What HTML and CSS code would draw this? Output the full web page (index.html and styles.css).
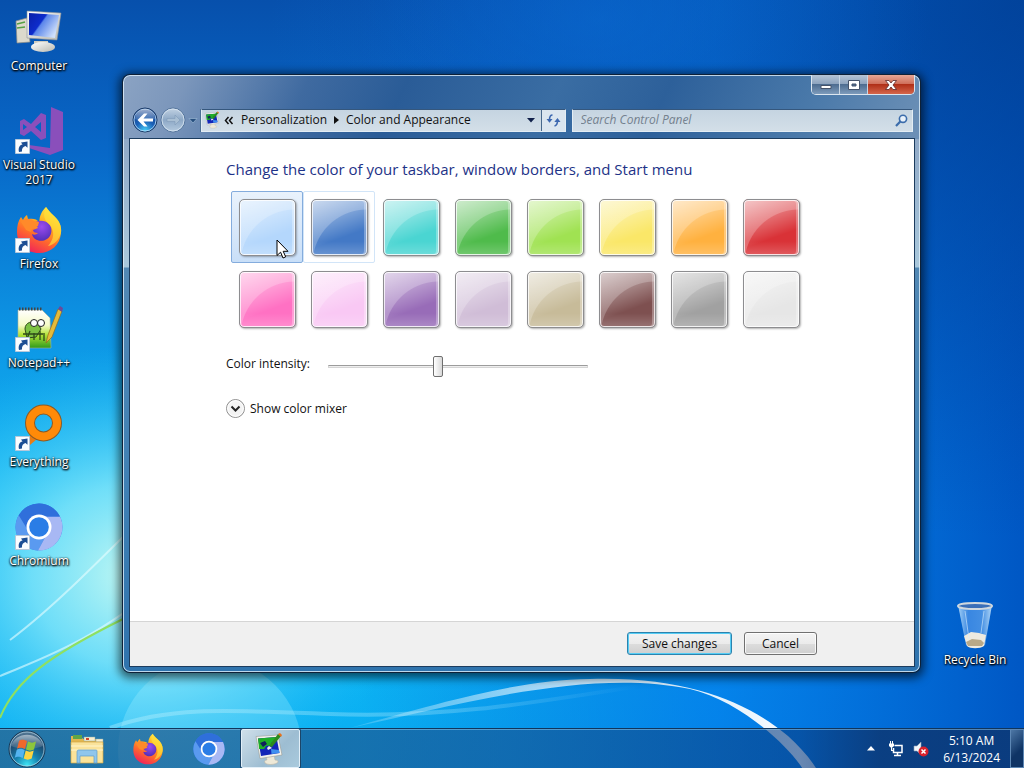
FILE: index.html
```html
<!DOCTYPE html>
<html lang="en">
<head>
<meta charset="utf-8">
<title>Color and Appearance</title>
<link rel="stylesheet" href="styles.css">
</head>
<body>
<svg class="defs" width="0" height="0" aria-hidden="true">
  <defs>
    <linearGradient id="ffBody" x1=".8" y1="0" x2=".3" y2="1"><stop offset="0" stop-color="#fff04a"/><stop offset=".35" stop-color="#ffb01e"/><stop offset=".65" stop-color="#ff6a2c"/><stop offset="1" stop-color="#f0205c"/></linearGradient>
    <radialGradient id="ffGlobe" cx=".5" cy=".3" r=".8"><stop offset="0" stop-color="#9a4cf0"/><stop offset="1" stop-color="#4a2bb0"/></radialGradient>
    <linearGradient id="screen" x1="0" y1="0" x2="1" y2=".6"><stop offset="0" stop-color="#0a1fa8"/><stop offset=".45" stop-color="#0d2ccc"/><stop offset=".5" stop-color="#5b86ea"/><stop offset="1" stop-color="#cfe0fb"/></linearGradient>
    <linearGradient id="shell" x1="0" y1="0" x2="1" y2="1"><stop offset="0" stop-color="#fff"/><stop offset="1" stop-color="#b9b9b0"/></linearGradient>
    <linearGradient id="bin" x1="0" y1="0" x2="1" y2="0"><stop offset="0" stop-color="#b5dcfa"/><stop offset=".3" stop-color="#3f8be4"/><stop offset=".7" stop-color="#4b94e6"/><stop offset="1" stop-color="#c3e3fb"/></linearGradient>
    <linearGradient id="paper" x1="0" y1="0" x2="0" y2="1"><stop offset="0" stop-color="#fff"/><stop offset=".4" stop-color="#f6fbc8"/><stop offset=".65" stop-color="#b3e338"/><stop offset="1" stop-color="#2f9a1c"/></linearGradient>
    <radialGradient id="orb" cx=".5" cy=".95" r=".95"><stop offset="0" stop-color="#3fe6f5"/><stop offset=".35" stop-color="#1583b0"/><stop offset=".7" stop-color="#1c4a70"/><stop offset="1" stop-color="#5e7f99"/></radialGradient>
    <linearGradient id="gloss" x1="0" y1="0" x2="0" y2="1"><stop offset="0" stop-color="#fff" stop-opacity=".85"/><stop offset="1" stop-color="#fff" stop-opacity=".15"/></linearGradient>
    <radialGradient id="backBall" cx=".5" cy=".95" r=".9"><stop offset="0" stop-color="#48d0f8"/><stop offset=".45" stop-color="#1c62b8"/><stop offset="1" stop-color="#123c86"/></radialGradient>
    <linearGradient id="fwdBall" x1="0" y1="0" x2="0" y2="1"><stop offset="0" stop-color="#c3d3e4"/><stop offset=".5" stop-color="#8da8c6"/><stop offset="1" stop-color="#b5cbe0"/></linearGradient>
    <symbol id="shortcut" viewBox="0 0 15 15"><path d="M.5.5h14v14H.5z" fill="#fbfdff" stroke="#b7c8da"/><path d="M4 13C3 9 4.500 6 7.500 5.500L6 3.500l6.500-1v6.300L10.500 7C8.300 7.500 6.500 9.500 7 12.500z" fill="#1c4e94"/></symbol>
    <symbol id="firefox" viewBox="0 0 48 48">
      <path d="M31 1c2 3 4 5 7 8 6 5 9 11 8 18-1 12-10 20-22 20C11 47 2 38 2 26c0-6 1-11 4-15l2 3c1-2 2-4 4-5l1 4c5-1 9 0 11 3 1-2 0-4 2-8 1-3 3-5 5-7z" fill="url(#ffBody)"/>
      <path d="M17 19c4-5 12-6 17-1 4 4 3 12-2 15-6 4-14 1-15-5 2 1 4 1 6-1-3 0-5-1-5-3l5-2c-1-2-3-3-6-3z" fill="url(#ffGlobe)"/>
      <path d="M31 1c2 3 4 5 7 8 6 5 9 11 8 18-2 7-7 12-13 13 6-7 7-14 2-21-5-4-8-9-4-18z" fill="#ffe23c" opacity=".65"/>
      <path d="M6 16c3-4 9-4 13-1l5 1-1 4-6 3-1 3-5-2z" fill="#ff8a2a"/>
    </symbol>
    <symbol id="chromium" viewBox="0 0 48 48">
      <circle cx="24" cy="24" r="23.500" fill="#2e7be6"/>
      <path d="M3.700 12.200A23.500 23.500 0 0 0 23 47.500L33 29 24 24z" fill="#5a9af0"/>
      <path d="M24 13.500h21A23.500 23.500 0 0 1 23 47.500L33 29z" fill="#a8b8f4"/>
      <path d="M3.700 12.200A23.500 23.500 0 0 1 45 13.500H24L14 29z" fill="#2f6fdb"/>
      <circle cx="24" cy="24" r="12.500" fill="#fff"/><circle cx="24" cy="24" r="9.800" fill="#2a7de6"/>
    </symbol>
    <symbol id="display" viewBox="0 0 32 32">
      <path d="M12 23l8-1 1 5c3 0 4 2 2 3-4 2-9 2-12 0-1-2 0-3 2-3z" fill="#eee9d8" stroke="#b9b5a6" stroke-width=".6"/>
      <path d="M2 3.500 24 2l4 20-22 3.500z" fill="#f2f2ec" stroke="#9a9a94" stroke-width=".6"/>
      <path d="M4 5.500 22.500 4l3 16L7 23z" fill="#1326b8"/>
      <path d="M4 5.500 22.500 4l.6 3-6 3 1 2-6 1-2 3-5 0z" fill="#1fae27"/>
      <path d="m6 10 5-2 2 3-4 3z" fill="#10205c"/><path d="m17 16 8 1 .5 3-8 1z" fill="#3f8ff0"/>
      <path d="m15 13 9-12 3 2-9 11z" fill="#2c8a1c"/><path d="m24 1 2-1 2 2-1 2z" fill="#e8701c"/><path d="m13 15 2-2 3 2-4 2z" fill="#eee"/>
    </symbol>
  </defs>
</svg>

<svg class="wallpaper" viewBox="0 0 1024 768" preserveAspectRatio="none" aria-hidden="true">
  <defs>
    <linearGradient id="sky" x1="0" y1="0" x2="0" y2="1"><stop offset="0" stop-color="#0750ac"/><stop offset=".2" stop-color="#0868c8"/><stop offset=".45" stop-color="#0d98e6"/><stop offset=".65" stop-color="#14baf4"/><stop offset="1" stop-color="#08aef2"/></linearGradient>
    <linearGradient id="east" x1="0" y1="0" x2="1" y2="0"><stop offset=".35" stop-color="#0460d4" stop-opacity="0"/><stop offset=".7" stop-color="#0274e8" stop-opacity=".75"/><stop offset="1" stop-color="#0057c4"/></linearGradient>
    <radialGradient id="dusk" cx="1" cy="0" r=".7"><stop offset="0" stop-color="#023c8e" stop-opacity=".75"/><stop offset="1" stop-color="#023c8e" stop-opacity="0"/></radialGradient>
    <radialGradient id="beam"><stop offset="0" stop-color="#0e72dc" stop-opacity=".45"/><stop offset="1" stop-color="#0e72dc" stop-opacity="0"/></radialGradient>
    <radialGradient id="glow"><stop offset="0" stop-color="#c8faf2"/><stop offset=".4" stop-color="#86e8fa" stop-opacity=".8"/><stop offset="1" stop-color="#20c0f8" stop-opacity="0"/></radialGradient>
    <linearGradient id="arc" x1="0" y1="0" x2="1" y2="0"><stop offset="0" stop-color="#fff" stop-opacity=".15"/><stop offset=".5" stop-color="#fff" stop-opacity=".75"/><stop offset="1" stop-color="#fff"/></linearGradient>
    <linearGradient id="ribbon" x1="0" y1="0" x2="1" y2="0"><stop offset="0" stop-color="#c9f5ff"/><stop offset=".6" stop-color="#c9f5ff" stop-opacity=".8"/><stop offset="1" stop-color="#c9f5ff" stop-opacity="0"/></linearGradient>
  </defs>
  <rect width="1024" height="768" fill="url(#sky)"/>
  <rect width="1024" height="768" fill="url(#east)"/>
  <rect width="1024" height="768" fill="url(#dusk)"/>
  <ellipse cx="600" cy="20" rx="330" ry="200" fill="url(#beam)"/>
  <ellipse cx="140" cy="575" rx="270" ry="230" fill="url(#glow)"/>
  <circle cx="210" cy="750" r="92" fill="#b8f6ff" opacity=".25"/>
  <path d="M0 676C50 655 100 640 190 560M10 640C50 610 90 570 150 510" fill="none" stroke="#e8fdff" stroke-width="2" opacity=".6"/>
  <path d="M0 718C15 680 50 655 125 618" fill="none" stroke="#8fe060" stroke-width="2"/>
  <path d="M110 728C170 706 230 710 330 714C440 718 520 705 640 686" fill="none" stroke="url(#ribbon)" stroke-width="4" opacity=".35"/>
  <path d="M350 728C450 700 520 680 590 679C690 676 750 704 788 736C802 749 812 760 820 775L806 775C796 752 742 701 690 689C590 668 460 704 350 728z" fill="url(#arc)"/>
</svg>

<main class="desktop">
  <ul class="icons">
    <li><a class="shortcut" href="#computer">
      <svg class="pic" viewBox="0 0 48 48"><path d="m1 13 11-3 3 24-13 1z" fill="#dcd9cc" stroke="#8d8d86" stroke-width=".7"/><path d="m2 16 8-2m-8 6 8-1" stroke="#56a045" stroke-width="1.500"/><path d="M19 33h14v5H19z" fill="#cfccc0"/><ellipse cx="28" cy="39" rx="12" ry="5" fill="url(#shell)"/><path d="M12 3 46 5l-4 27-30-2z" fill="url(#shell)" stroke="#8b9098" stroke-width=".6"/><path d="m14 5 30 2-4 23-26-3z" fill="url(#screen)"/></svg>
      <span>Computer</span></a></li>
    <li><a class="shortcut" href="#vs">
      <svg class="pic" viewBox="0 0 48 48"><path d="m36 0 12 5v38l-13 5-21-7v-3l21 3z" fill="#8a4fbb"/><path fill-rule="evenodd" d="m26 6 5 2v23l-5 2-10-9-7 5-4-2V14l4-2 7 5zm0 9-6 5 6 5zM8 17v6l4-3z" fill="#8a4fbb"/></svg>
      <svg class="badge"><use href="#shortcut"/></svg><span>Visual Studio 2017</span></a></li>
    <li><a class="shortcut" href="#firefox-app"><svg class="pic"><use href="#firefox"/></svg><svg class="badge"><use href="#shortcut"/></svg><span>Firefox</span></a></li>
    <li><a class="shortcut" href="#npp">
      <svg class="pic" viewBox="0 0 48 48"><path d="M3 5h24l8 8 1 30L3 43z" fill="url(#paper)" stroke="#a8b39b" stroke-width=".6"/><path d="M4 4h23" stroke="#444" stroke-width="3" stroke-dasharray="1.500 1.500"/><path d="M10 24c0-7 8-9 13-5l3 5-5 8-9 1z" fill="#7cc142" stroke="#2d4a18"/><circle cx="19" cy="18" r="3.500" fill="#fff" stroke="#222"/><circle cx="26" cy="18" r="3.500" fill="#fff" stroke="#222"/><path d="M8 29h20M12 34l3-8m4 9v-7m6-2v9m4-7v8" stroke="#2d4a18" stroke-width="1.300"/><path d="M43 4 33 30l-2 8 6-6L47 6z" fill="#e3bb3b" stroke="#93691c" stroke-width=".7"/><path d="m43 4 2-3 3 2-1 4z" fill="#6b4a9a"/></svg>
      <svg class="badge"><use href="#shortcut"/></svg><span>Notepad++</span></a></li>
    <li><a class="shortcut" href="#everything">
      <svg class="pic" viewBox="0 0 48 48"><path d="m17 30 5 5L8 47l-6-5z" fill="#e97c12"/><circle cx="28.500" cy="19" r="13.500" fill="none" stroke="#8a5a26" stroke-width="10"/><circle cx="28.500" cy="19" r="13.500" fill="none" stroke="#ff8a08" stroke-width="8"/></svg>
      <svg class="badge"><use href="#shortcut"/></svg><span>Everything</span></a></li>
    <li><a class="shortcut" href="#chromium-app"><svg class="pic"><use href="#chromium"/></svg><svg class="badge"><use href="#shortcut"/></svg><span>Chromium</span></a></li>
    <li class="bin"><a class="shortcut" href="#bin">
      <svg class="pic" viewBox="0 0 48 48"><path d="m7 3 34 0-7 40c-3 3-16 3-19 0z" fill="url(#bin)" opacity=".9"/><path d="m13 34 7-4 8 1 7 2-2 11c-4 3-14 3-17 0z" fill="#eeeae0"/><path d="m15 40 6-3 9 1 3 3-2 3H17z" fill="#b9a988"/><ellipse cx="24" cy="4" rx="17" ry="3" fill="#3a6fb8" stroke="#cfd8de" stroke-width="2"/><path d="m14 9 4 28M33 9l-3 22" stroke="#d8eeff" opacity=".6"/></svg>
      <span>Recycle Bin</span></a></li>
  </ul>

  <section class="window" aria-label="Color and Appearance">
    <div class="caption">
      <button class="cap" aria-label="Minimize"><svg width="12" height="10"><path d="M1 5.500h10v3H1z" fill="#fff" stroke="#45536a"/></svg></button>
      <button class="cap" aria-label="Maximize"><svg width="12" height="10"><path fill-rule="evenodd" d="M.5.500h11v9H.5zM4 4v2h4V4z" fill="#fff" stroke="#45536a"/></svg></button>
      <button class="cap close" aria-label="Close"><svg width="12" height="10"><path d="M.5.500h3.500l2 2.500L8 .5h3.500L8 5l3.500 4.500H8L6 7 4 9.500H.5L4 5z" fill="#fff" stroke="#5c2a2a" stroke-width=".8"/></svg></button>
    </div>
    <div class="navbar">
      <div class="travel">
        <button aria-label="Back"><svg width="26" height="26" viewBox="0 0 26 26"><circle cx="13" cy="13" r="12" fill="url(#backBall)" stroke="#1c3a66"/><circle cx="13" cy="13" r="11" fill="none" stroke="#bfe0fa" opacity=".8"/><path d="M3 12a10 10 0 0 1 20 0c-5 2-15 2-20 0z" fill="url(#gloss)" opacity=".7"/><path d="m5.500 13 6.500-6.500h3.500L11.500 11.500H21v3h-9.500l4 5H12z" fill="#fff"/></svg></button>
        <button aria-label="Forward" disabled><svg width="26" height="26" viewBox="0 0 26 26"><circle cx="13" cy="13" r="12" fill="url(#fwdBall)" stroke="#55759c"/><circle cx="13" cy="13" r="11" fill="none" stroke="#dbe7f2" opacity=".8"/><path d="M20 13l-5-5v3.500H7v3h8V18z" fill="#a9bfd4" stroke="#7f9bb9" stroke-width=".6"/></svg></button>
        <button class="recent" aria-label="Recent pages"><svg width="10" height="7"><path d="M1 1.500h8L5 6z" fill="#27507f" stroke="#9ab6d2" stroke-width=".7"/></svg></button>
      </div>
      <nav class="address" aria-label="Address">
        <svg class="place"><use href="#display"/></svg>
        <button class="crumb-nav" aria-label="Parent folders"><svg width="10" height="9"><path d="m4.500 1-3 3.500 3 3.500M8.500 1l-3 3.500 3 3.500" fill="none" stroke="#111" stroke-width="1.500"/></svg></button>
        <a href="#personalization">Personalization</a>
        <svg class="sep" width="5" height="8"><path d="M0 0l5 4-5 4z" fill="#111"/></svg>
        <a href="#color">Color and Appearance</a>
        <button class="drop" aria-label="Previous locations"><svg width="8" height="5"><path d="M0 0h8L4 4.500z" fill="#10204a"/></svg></button>
        <button class="refresh" aria-label="Refresh"><svg width="15" height="13" viewBox="0 0 15 13"><path d="M6.500 1C4 1 3.500 2.500 3.500 6M8.500 12c2.500-.5 3-2 3-5.500" fill="none" stroke="#3d68b0" stroke-width="1.600"/><path d="M.5 5h6l-3 3.800zM8.300 8h6.200l-3-4z" fill="#3d68b0"/></svg></button>
      </nav>
      <div class="search">
        <input type="search" placeholder="Search Control Panel" aria-label="Search Control Panel">
        <svg width="13" height="13"><circle cx="8" cy="4.800" r="3.600" fill="#e8f1fa" stroke="#3b6cab" stroke-width="1.600"/><path d="M5.300 7.500 1 12" stroke="#3b6cab" stroke-width="2.200"/></svg>
      </div>
    </div>
    <div class="client">
      <div class="page">
        <h1>Change the color of your taskbar, window borders, and Start menu</h1>
        <div class="swatches">
          <button class="swatch sky hot" aria-label="Sky"><i></i>
            <svg class="pointer" width="13" height="20" viewBox="0 0 13 20"><path d="M1 1v15.500l3.600-3.300L7 19l2.700-1.200-2.500-5.500H12z" fill="#fff" stroke="#000"/></svg></button>
          <button class="swatch twilight chosen" aria-label="Twilight"><i></i></button>
          <button class="swatch sea" aria-label="Sea"><i></i></button>
          <button class="swatch leaf" aria-label="Leaf"><i></i></button>
          <button class="swatch lime" aria-label="Lime"><i></i></button>
          <button class="swatch sun" aria-label="Sun"><i></i></button>
          <button class="swatch pumpkin" aria-label="Pumpkin"><i></i></button>
          <button class="swatch ruby" aria-label="Ruby"><i></i></button>
          <button class="swatch fuchsia" aria-label="Fuchsia"><i></i></button>
          <button class="swatch blush" aria-label="Blush"><i></i></button>
          <button class="swatch violet" aria-label="Violet"><i></i></button>
          <button class="swatch lavender" aria-label="Lavender"><i></i></button>
          <button class="swatch taupe" aria-label="Taupe"><i></i></button>
          <button class="swatch chocolate" aria-label="Chocolate"><i></i></button>
          <button class="swatch slate" aria-label="Slate"><i></i></button>
          <button class="swatch frost" aria-label="Frost"><i></i></button>
        </div>
        <div class="intensity">
          <label for="level">Color intensity:</label>
          <input id="level" type="range" min="0" max="100" value="42">
        </div>
        <button class="expander"><svg width="19" height="19"><circle cx="9.500" cy="9.500" r="9" fill="#f3f3f3" stroke="#8e8e8e"/><circle cx="9.500" cy="9.500" r="7.800" fill="none" stroke="#fff"/><path d="m5.500 7.500 4 4 4-4" fill="none" stroke="#222" stroke-width="2"/></svg>Show color mixer</button>
      </div>
      <footer class="actions">
        <button class="push default">Save changes</button>
        <button class="push cancel">Cancel</button>
      </footer>
    </div>
  </section>
</main>

<footer class="taskbar">
  <button class="start" aria-label="Start"><svg width="40" height="38" viewBox="0 0 40 38"><circle cx="20" cy="19" r="18" fill="url(#orb)" stroke="#17344f"/><circle cx="20" cy="19" r="17" fill="none" stroke="#b7d8ea" opacity=".7"/><path d="M4 16a16.500 15 0 0 1 32 0c-9 4-23 4-32 0z" fill="url(#gloss)" opacity=".6"/><path d="M12 11c3-2 5-1 8 0l-2 8c-3-1-5-2-8 0z" fill="#f0682c"/><path d="M21 11.500c3 1.500 5 1.500 8 0l-2 8c-3 1.500-5 1.500-8 0z" fill="#8cc63c"/><path d="M9.700 20c3-2 5-1 8 0l-2 8c-3-1-5-2-8 0z" fill="#54b4f0"/><path d="M18.700 20.500c3 1.500 5 1.500 8 0l-2 8c-3 1.500-5 1.500-8 0z" fill="#fcd440"/></svg></button>
  <div class="tasks">
    <button class="task" aria-label="Explorer"><svg width="34" height="32" viewBox="0 0 34 32"><path d="M1 5V3h10l2 3h20v23H1z" fill="#e2b64f"/><path d="M3 2h9v4H3z" fill="#5fa648"/><path d="M14 4h11v4H14zM26 6h7v3h-7z" fill="#f8efd0" stroke="#8aa" stroke-width=".5"/><path d="M16 5h3v2h-3z" fill="#d0452c"/><path d="M1 9h32v21H1z" fill="#fae39a" stroke="#d3a844" stroke-width=".7"/><path d="M1 13h32M1 17h32" stroke="#fff5cc"/><path d="M7 30V19c0-2 1-2 2-2h16c2 0 2 0 2 2v11h-3v-7H10v7z" fill="#8fc6ec" stroke="#5d9cca" stroke-width=".7"/></svg></button>
    <button class="task" aria-label="Firefox"><svg width="32" height="32"><use href="#firefox"/></svg></button>
    <button class="task" aria-label="Chromium"><svg width="32" height="32"><use href="#chromium"/></svg></button>
    <button class="task active" aria-label="Personalization"><svg width="32" height="32"><use href="#display"/></svg></button>
  </div>
  <div class="tray">
    <button aria-label="Show hidden icons"><svg width="8" height="5"><path d="M4 0l4 4.500H0z" fill="#fff"/></svg></button>
    <button aria-label="Network"><svg width="15" height="16" viewBox="0 0 15 16"><path d="M5.500 4.500H13v7H4.500V7M8.500 12v2.500M5 14.500h7" fill="none" stroke="#fff" stroke-width="1.500"/><path d="M0 2.500h5V5L3.300 6.500H1.700L0 5zM1 0h1v2.500H1zM3 0h1v2.500H3zM2 6h1v3h2v1H2z" fill="#fff"/></svg></button>
    <button aria-label="Volume muted"><svg width="16" height="16" viewBox="0 0 16 16"><path d="M1 5h3l4-4v13l-4-4H1z" fill="#f2f6fa" stroke="#8aa0b8" stroke-width=".6"/><circle cx="10.500" cy="10.500" r="5" fill="#d9202c"/><path d="m8.500 8.500 4 4m0-4-4 4" stroke="#fff" stroke-width="1.500"/></svg></button>
  </div>
  <time class="clock" datetime="2024-06-13T05:10"><span>5:10 AM</span><span>6/13/2024</span></time>
  <button class="peek" aria-label="Show desktop"></button>
</footer>
</body>
</html>
```
FILE: styles.css
```css
* { box-sizing: border-box; }

body {
  margin: 0;
  height: 100vh;
  display: flex;
  flex-direction: column;
  overflow: hidden;
  background: #0a7ad8;
  font: 12px/16px "Open Sans", "Noto Sans", sans-serif;
  color: #111;
}

button {
  margin: 0;
  padding: 0;
  border: 0;
  background: none;
  font: inherit;
  color: inherit;
  display: flex;
  align-items: center;
  justify-content: center;
}

a { color: inherit; text-decoration: none; }

.defs { position: absolute; }

.wallpaper {
  position: absolute;
  inset: 0;
  width: 100%;
  height: 100%;
  z-index: -1;
}

.desktop { flex: 1; position: relative; min-height: 0; }

/* desktop icons */
.icons {
  list-style: none;
  margin: 0;
  padding: 8px 10px 0 0;
  display: grid;
  grid-template-columns: 78px 1fr 78px;
  grid-auto-rows: 99px;
}

.icons li { grid-column: 1; }
.icons .bin { grid-column: 3; grid-row: 7; }

.shortcut {
  position: relative;
  display: flex;
  flex-direction: column;
  align-items: center;
  gap: 2px;
  line-height: 15px;
  text-align: center;
  color: #fff;
  text-shadow: 0 1px 2px #000, 1px 1px 2px #000, 0 0 2px rgba(0, 0, 0, .7);
}

.pic { width: 48px; height: 48px; }

.badge {
  position: absolute;
  left: 15px;
  top: 32px;
  width: 15px;
  height: 15px;
}

/* window */
.window {
  position: absolute;
  inset: 75px 104px 56px 123px;
  display: flex;
  flex-direction: column;
  padding: 0 5px 5px 6px;
  border-radius: 7px;
  background:
    linear-gradient(115deg, #8ba3c3 0, #7b96bb 60px, #3f6aa0 170px, #2a5c97 260px, #3a6da3 400px, #2d609a 500px, #4b7aaa 640px, #7193b8 760px, #6b8db3 100%) 0 0 / 100% 64px no-repeat,
    linear-gradient(#8fa8c6 60px, #a9c8dc 192px, #5288b4 193px, #3f80b4 70%, #2f73ad);
  box-shadow: inset 0 0 0 1px rgba(225, 240, 250, .8), 0 0 0 1px #0e2138, 0 2px 10px 4px rgba(0, 0, 0, .6);
}

.caption {
  display: flex;
  align-self: flex-end;
  height: 20px;
  border: 1px solid #dce6ef;
  border-top: 0;
  border-radius: 0 0 5px 5px;
  overflow: hidden;
}

.cap {
  width: 28px;
  border-right: 1px solid #c8d6e4;
  background: linear-gradient(#b5c4d6, #8fa5bf 45%, #4e6d91 50%, #7d9bbb);
}

.close {
  width: 46px;
  border-right: 0;
  background: linear-gradient(#e6a796, #d0715c 45%, #b03018 50%, #d4664c);
}

.navbar {
  display: flex;
  align-items: center;
  gap: 6px;
  padding: 12px 2px 5px 3px;
}

.travel { display: flex; align-items: center; gap: 2px; width: 63px; }

.address,
.search {
  display: flex;
  align-items: center;
  height: 23px;
  border: 1px solid #e3edf4;
  border-top-color: #35577d;
  background: linear-gradient(#c5d4e1, #d3dfe8);
}

.address { flex: 370 0 0; padding-left: 2px; box-shadow: -1px 0 0 #4b6e94; }
.address a { white-space: nowrap; }
.place { width: 17px; height: 18px; }
.crumb-nav { padding: 0 7px 0 3px; }
.sep { margin: 0 7px; flex: none; }
.drop { margin-left: auto; width: 20px; height: 21px; }
.refresh { width: 24px; height: 21px; border-left: 1px solid #47688c; background: #dae5ef; }

.search { flex: 336 0 0; padding: 0 4px 0 8px; }

.search input {
  flex: 1;
  min-width: 0;
  padding: 0;
  border: 0;
  outline: 0;
  background: none;
  font: inherit;
  font-style: italic;
}

.search input::placeholder { color: #74818e; }

.client {
  flex: 1;
  display: flex;
  flex-direction: column;
  min-height: 0;
  border: 1px solid #1c3c5e;
  background: #fff;
}

.page { flex: 1; padding: 19px 96px 0; }

h1 {
  margin: 0;
  font-size: 15px;
  line-height: 22px;
  font-weight: 400;
  color: #1d3287;
}

.swatches {
  display: grid;
  grid-template-columns: repeat(auto-fill, 72px);
  padding: 11px 0 0 5px;
}

.swatch {
  position: relative;
  height: 72px;
  border: 1px solid transparent;
  border-radius: 2px;
}

.swatch i {
  width: 57px;
  height: 57px;
  border: 1px solid #8d8d90;
  border-radius: 5px;
  background:
    radial-gradient(circle at 55px 64px, transparent 54px, rgba(255, 255, 255, .22) 55px),
    linear-gradient(160deg, rgba(255, 255, 255, .65), rgba(255, 255, 255, 0) 65%),
    linear-gradient(transparent 75%, rgba(255, 255, 255, .2)),
    var(--tint);
  box-shadow: inset 0 0 0 1px rgba(255, 255, 255, .75), inset -2px 0 0 1px rgba(255, 255, 255, .3), 1px 1px 2px rgba(0, 0, 0, .3);
}

.hot { border-color: #84acdd; background: linear-gradient(#e9f2fc, #c9dff8); }
.chosen { border-color: #d2e5f8; }

.sky { --tint: #b4d7fc; }
.twilight { --tint: #4379c6; }
.sea { --tint: #4ad5d2; }
.leaf { --tint: #4fbb4b; }
.lime { --tint: #a0e252; }
.sun { --tint: #fae768; }
.pumpkin { --tint: #ffb13f; }
.ruby { --tint: #d93237; }
.fuchsia { --tint: #ff71c3; }
.blush { --tint: #f9c8f4; }
.violet { --tint: #986cb8; }
.lavender { --tint: #d0bdd7; }
.taupe { --tint: #c7bb99; }
.chocolate { --tint: #7e5050; }
.slate { --tint: #a1a1a1; }
.frost { --tint: #e6e6e6; }

.pointer { position: absolute; left: 44px; top: 47px; }

.intensity { display: flex; align-items: center; gap: 18px; margin-top: 16px; }
.intensity label { flex: none; }

.intensity input {
  appearance: none;
  width: 260px;
  height: 22px;
  margin: 4px 0 0;
  background: none;
}

.intensity input::-webkit-slider-runnable-track {
  height: 3px;
  border: 1px solid #d5d5d5;
  border-top-color: #9c9c9c;
  background: #eee;
}

.intensity input::-webkit-slider-thumb {
  appearance: none;
  width: 10px;
  height: 21px;
  margin-top: -10px;
  border: 1px solid #6f6f6f;
  border-radius: 2px;
  background: linear-gradient(90deg, #fff, #d8d8d8);
}

.expander { gap: 5px; margin-top: 22px; }

.actions {
  display: flex;
  justify-content: flex-end;
  gap: 12px;
  padding: 10px 97px 11px 0;
  border-top: 1px solid #d5d5d5;
  background: #f0f0f0;
}

.push {
  width: 73px;
  height: 23px;
  border: 1px solid #707070;
  border-radius: 3px;
  background: linear-gradient(#f3f3f3, #ebebeb 50%, #dddddd 50%, #cfcfcf);
  box-shadow: inset 0 0 0 1px rgba(255, 255, 255, .8);
}

.default { width: 105px; border-color: #2c83ae; box-shadow: inset 0 0 0 1px #55cdf5; }

/* taskbar */
.taskbar {
  display: flex;
  height: 40px;
  border-top: 1px solid #10355c;
  background: linear-gradient(90deg, rgba(40, 95, 140, .75), rgba(20, 90, 155, .72) 50%, rgba(8, 60, 130, .6) 78%, rgba(12, 55, 115, .85) 86%);
  box-shadow: inset 0 1px 0 rgba(150, 205, 240, .5);
  color: #fff;
}

.start { width: 58px; padding-right: 4px; }
.tasks { display: flex; flex: 1; gap: 2px; }
.task { width: 59px; padding-right: 2px; }

.active {
  border: 1px solid #e2eff8;
  border-radius: 2px;
  background: linear-gradient(135deg, #cfdfe9, #9dbdd2 60%, #a9cadd);
  box-shadow: 0 0 0 1px #1c4568;
}

.tray { display: flex; align-items: center; gap: 9px; padding: 0 14px 0 0; }
.tray button:first-child { margin-right: 5px; }
.clock { display: flex; flex-direction: column; justify-content: center; align-items: center; line-height: 17px; }
.peek { width: 14px; margin-left: 10px; border: 1px solid #5d87b4; background: linear-gradient(135deg, #4d77a5, #0f3465 60%); }
```
